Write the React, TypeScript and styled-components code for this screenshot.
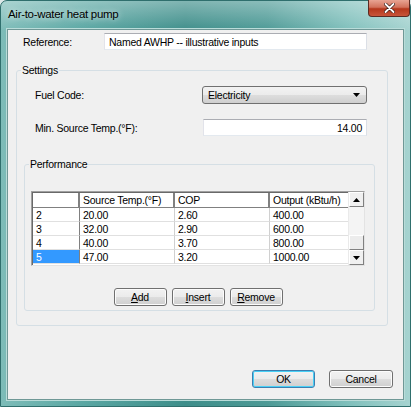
import React from 'react';
import styled, { createGlobalStyle } from 'styled-components';

const GlobalStyle = createGlobalStyle`
  html, body {
    margin: 0;
    padding: 0;
    background: #dde8e8;
  }
  body {
    width: 411px;
    height: 407px;
    overflow: hidden;
    font-family: "Liberation Sans", Arial, sans-serif;
    font-size: 10.5px;
    letter-spacing: -0.25px;
    color: #000;
  }
`;

const Frame = styled.div`
  width: 411px;
  height: 407px;
  box-sizing: border-box;
  display: flex;
  flex-direction: column;
  padding: 0 6px 6px 6px;
  border-radius: 7px 7px 0 0;
  border: 1px solid #2f6f6d;
  background:
    linear-gradient(to bottom, rgba(255, 255, 255, 0.35), rgba(255, 255, 255, 0) 30px),
    linear-gradient(to right, #7dbcb8 0%, #5aa7a3 20%, #3e8e8a 45%, #4d9a96 65%, #80c0bc 85%, #a6d3d0 100%);
`;

const TitleBar = styled.div`
  height: 28px;
  display: flex;
  justify-content: space-between;
  align-items: flex-start;
  flex-shrink: 0;
`;

const Title = styled.div`
  margin-top: 7px;
  padding-left: 1px;
  font-size: 11.5px;
  letter-spacing: -0.3px;
  color: #000;
  text-shadow: 0 0 6px rgba(255, 255, 255, 0.9);
`;

const CloseButton = styled.div`
  width: 42px;
  height: 17px;
  margin-right: -6px;
  margin-top: -1px;
  box-sizing: border-box;
  border: 1px solid #5b2a22;
  border-top: none;
  border-radius: 0 0 4px 4px;
  background: linear-gradient(to bottom, #e8a493 0%, #d2725c 45%, #b5371c 55%, #c8553a 100%);
  display: flex;
  align-items: center;
  justify-content: center;
`;

const Client = styled.div`
  flex: 1;
  display: flex;
  flex-direction: column;
  background: #f0f0f0;
  border: 1px solid #6f9896;
  box-shadow: 0 0 0 1px #b9dcd9;
  padding: 3px 15px 0 8px;
`;

const FieldRow = styled.div<{ indent: number; right?: number; gap?: number }>`
  display: flex;
  align-items: center;
  justify-content: space-between;
  padding-left: ${({ indent }) => indent}px;
  padding-right: ${({ right }) => right ?? 0}px;
  margin-bottom: ${({ gap }) => gap ?? 0}px;
`;

const Label = styled.span`
  white-space: nowrap;
`;

const TextBox = styled.div<{ width: number; right?: boolean }>`
  width: ${({ width }) => width}px;
  height: 17px;
  box-sizing: border-box;
  background: #fff;
  border: 1px solid;
  border-color: #abadb3 #dbdfe6 #e3e9ef #e2e3ea;
  display: flex;
  align-items: center;
  justify-content: ${({ right }) => (right ? 'flex-end' : 'flex-start')};
  padding: 0 4px;
`;

const ComboBox = styled.div`
  width: 165px;
  height: 18px;
  box-sizing: border-box;
  border: 1px solid #707070;
  border-radius: 3px;
  background: linear-gradient(to bottom, #f2f2f2 0%, #ebebeb 50%, #dddddd 51%, #cfcfcf 100%);
  display: flex;
  align-items: center;
  justify-content: space-between;
  padding: 0 6px 0 5px;
`;

const GroupBox = styled.fieldset<{ ml: number; mr: number; mb: number }>`
  margin: 0 ${({ mr }) => mr}px ${({ mb }) => mb}px ${({ ml }) => ml}px;
  border: 1px solid #d5dfe5;
  border-radius: 3px;
  padding: 0;
  min-width: 0;
  display: flex;
  flex-direction: column;
`;

const Legend = styled.legend`
  padding: 0 1px;
  margin-left: 4px;
  line-height: 12px;
`;

const GroupBody = styled.div<{ pad: string }>`
  padding: ${({ pad }) => pad};
  display: flex;
  flex-direction: column;
`;

const Grid = styled.div`
  display: flex;
  border: 1px solid;
  border-color: #a0a0a0 #e3e3e3 #e3e3e3 #a0a0a0;
  background: #fff;
  height: 75px;
  box-sizing: border-box;
  box-shadow: inset 1px 1px 0 #696969;
`;

const Table = styled.div`
  flex: 1;
  display: grid;
  grid-template-columns: 47px 95px 95px 80px;
  grid-auto-rows: 14px;
  grid-template-rows: 15px;
  align-content: start;
  padding-top: 1px;
  padding-left: 1px;
  overflow: hidden;
`;

const HeadCell = styled.div`
  background: #fff;
  border-right: 2px solid #808080;
  border-bottom: 1px solid #808080;
  padding-left: 3px;
  display: flex;
  align-items: center;
  white-space: nowrap;
  box-sizing: border-box;
  overflow: hidden;
  &:nth-child(4) {
    border-right: none;
  }
`;

const Cell = styled.div<{ selected?: boolean; first?: boolean }>`
  background: ${({ selected }) => (selected ? '#3399ff' : '#fff')};
  color: ${({ selected }) => (selected ? '#fff' : '#000')};
  border-right: 1px solid ${({ first }) => (first ? '#808080' : '#d0d0d0')};
  border-bottom: 1px solid #e0e0e0;
  padding-left: 3px;
  display: flex;
  align-items: center;
  box-sizing: border-box;
  white-space: nowrap;
`;

const ScrollBar = styled.div`
  width: 15px;
  display: flex;
  flex-direction: column;
  background: #f4f4f4;
  border-left: 1px solid #eaeaea;
`;

const ScrollButton = styled.div`
  height: 15px;
  box-sizing: border-box;
  border: 1px solid;
  border-color: #fff #808080 #808080 #fff;
  background: #f0f0f0;
  display: flex;
  align-items: center;
  justify-content: center;
`;

const Track = styled.div`
  flex: 1;
  display: flex;
  flex-direction: column;
  justify-content: flex-end;
`;

const Thumb = styled.div`
  height: 15px;
  box-sizing: border-box;
  border: 1px solid;
  border-color: #fff #808080 #808080 #fff;
  background: #ececec;
`;

const ButtonRow = styled.div<{ justify: string; pad: string; gap: number }>`
  display: flex;
  justify-content: ${({ justify }) => justify};
  gap: ${({ gap }) => gap}px;
  padding: ${({ pad }) => pad};
`;

const Button = styled.button<{ w: number; focused?: boolean }>`
  width: ${({ w }) => w}px;
  height: 18px;
  padding: 0;
  font-family: "Liberation Sans", Arial, sans-serif;
  font-size: 10.5px;
  letter-spacing: -0.25px;
  color: #000;
  border: 1px solid ${({ focused }) => (focused ? '#3c7fb1' : '#707070')};
  border-radius: 3px;
  background: linear-gradient(to bottom, #f2f2f2 0%, #ebebeb 50%, #dddddd 51%, #cfcfcf 100%);
  box-shadow: inset 0 0 0 1px ${({ focused }) => (focused ? '#48d0f6' : '#fcfcfc')};
  display: flex;
  align-items: center;
  justify-content: center;
`;

const Mnemonic = styled.span`
  text-decoration: underline;
`;

const Arrow = ({ up }: { up?: boolean }) => (
  <svg width="7" height="4" viewBox="0 0 7 4">
    <path d={up ? 'M0 4 L3.5 0 L7 4 Z' : 'M0 0 L7 0 L3.5 4 Z'} fill="#000" />
  </svg>
);

const rows = [
  ['2', '20.00', '2.60', '400.00'],
  ['3', '32.00', '2.90', '600.00'],
  ['4', '40.00', '3.70', '800.00'],
  ['5', '47.00', '3.20', '1000.00'],
];

function App() {
  return (
    <>
      <GlobalStyle />
      <Frame>
        <TitleBar>
          <Title>Air-to-water heat pump</Title>
          <CloseButton>
            <svg width="11" height="10" viewBox="0 0 11 10">
              <path d="M1.5 1 L9.5 9 M9.5 1 L1.5 9" stroke="#3a1a14" strokeWidth="3.2" strokeLinecap="round" />
              <path d="M1.5 1 L9.5 9 M9.5 1 L1.5 9" stroke="#fff" strokeWidth="1.8" strokeLinecap="round" />
            </svg>
          </CloseButton>
        </TitleBar>
        <Client>
          <FieldRow indent={7} right={21} gap={14}>
            <Label>Reference:</Label>
            <TextBox width={263}>Named AWHP -- illustrative inputs</TextBox>
          </FieldRow>
          <GroupBox ml={0} mr={0} mb={0}>
            <Legend>Settings</Legend>
            <GroupBody pad="10px 20px 0 18px">
              <FieldRow indent={0} gap={15}>
                <Label>Fuel Code:</Label>
                <ComboBox>
                  <span>Electricity</span>
                  <Arrow />
                </ComboBox>
              </FieldRow>
              <FieldRow indent={0} gap={22}>
                <Label>Min. Source Temp.(°F):</Label>
                <TextBox width={164} right>14.00</TextBox>
              </FieldRow>
            </GroupBody>
            <GroupBox ml={7} mr={12} mb={14}>
              <Legend>Performance</Legend>
              <GroupBody pad="21px 9px 4px 6px">
                <Grid>
                  <Table>
                    <HeadCell />
                    <HeadCell>Source Temp.(°F)</HeadCell>
                    <HeadCell>COP</HeadCell>
                    <HeadCell>Output (kBtu/h)</HeadCell>
                    {rows.map((r, i) =>
                      r.map((v, j) => (
                        <Cell key={`${i}-${j}`} first={j === 0} selected={i === 3 && j === 0}>
                          {v}
                        </Cell>
                      ))
                    )}
                  </Table>
                  <ScrollBar>
                    <ScrollButton>
                      <Arrow up />
                    </ScrollButton>
                    <Track>
                      <Thumb />
                    </Track>
                    <ScrollButton>
                      <Arrow />
                    </ScrollButton>
                  </ScrollBar>
                </Grid>
                <ButtonRow justify="center" pad="22px 0 0 0" gap={5}>
                  <Button w={53}>
                    <Mnemonic>A</Mnemonic>dd
                  </Button>
                  <Button w={53}>
                    <Mnemonic>I</Mnemonic>nsert
                  </Button>
                  <Button w={53}>
                    <Mnemonic>R</Mnemonic>emove
                  </Button>
                </ButtonRow>
              </GroupBody>
            </GroupBox>
          </GroupBox>
          <ButtonRow justify="flex-end" pad="44px 0 0 0" gap={14} style={{ marginRight: -5 }}>
            <Button w={63} focused>
              OK
            </Button>
            <Button w={64}>Cancel</Button>
          </ButtonRow>
        </Client>
      </Frame>
    </>
  );
}

export default App;
